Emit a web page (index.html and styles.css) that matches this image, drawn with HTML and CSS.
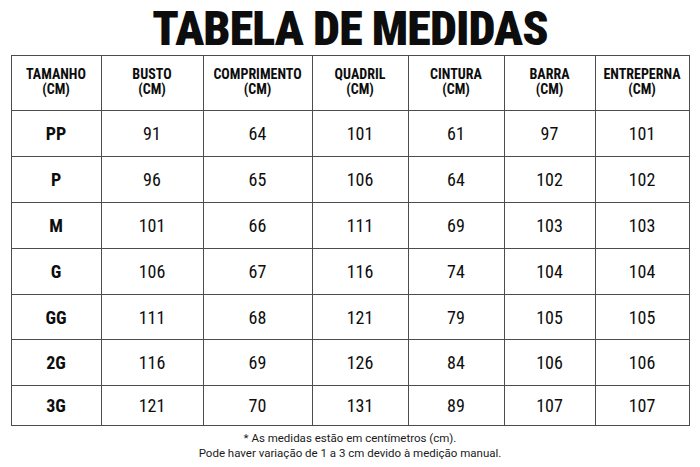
FILE: index.html
```html
<!DOCTYPE html>
<html lang="pt-BR">
<head>
<meta charset="utf-8">
<title>Tabela de Medidas</title>
<link rel="stylesheet" href="styles.css">
</head>
<body>
<div class="page">
  <h1 class="title">TABELA DE MEDIDAS</h1>
  <table class="sizes">
    <colgroup>
      <col class="c1"><col class="c2"><col class="c3"><col class="c4"><col class="c5"><col class="c6"><col class="c7">
    </colgroup>
    <thead>
      <tr>
        <th>TAMANHO<br>(CM)</th>
        <th>BUSTO<br>(CM)</th>
        <th>COMPRIMENTO<br>(CM)</th>
        <th>QUADRIL<br>(CM)</th>
        <th>CINTURA<br>(CM)</th>
        <th>BARRA<br>(CM)</th>
        <th>ENTREPERNA<br>(CM)</th>
      </tr>
    </thead>
    <tbody>
      <tr><td class="size">PP</td><td>91</td><td>64</td><td>101</td><td>61</td><td>97</td><td>101</td></tr>
      <tr><td class="size">P</td><td>96</td><td>65</td><td>106</td><td>64</td><td>102</td><td>102</td></tr>
      <tr><td class="size">M</td><td>101</td><td>66</td><td>111</td><td>69</td><td>103</td><td>103</td></tr>
      <tr><td class="size">G</td><td>106</td><td>67</td><td>116</td><td>74</td><td>104</td><td>104</td></tr>
      <tr><td class="size">GG</td><td>111</td><td>68</td><td>121</td><td>79</td><td>105</td><td>105</td></tr>
      <tr><td class="size">2G</td><td>116</td><td>69</td><td>126</td><td>84</td><td>106</td><td>106</td></tr>
      <tr class="last"><td class="size">3G</td><td>121</td><td>70</td><td>131</td><td>89</td><td>107</td><td>107</td></tr>
    </tbody>
  </table>
  <div class="notes">
    <p>* As medidas estão em centímetros (cm).</p>
    <p>Pode haver variação de 1 a 3 cm devido à medição manual.</p>
  </div>
</div>
</body>
</html>
```
FILE: styles.css
```css
html, body {
  margin: 0;
  padding: 0;
  background: #ffffff;
}
.page {
  width: 700px;
  height: 467px;
  display: flex;
  flex-direction: column;
  align-items: center;
  font-family: Roboto, "Liberation Sans", sans-serif;
  color: #0d0d0d;
}
.title {
  margin: 0 0 -2px;
  height: 57px;
  line-height: 57px;
  font-size: 48px;
  font-weight: 900;
  font-stretch: 75%;
  font-variation-settings: "wdth" 75;
  text-align: center;
  letter-spacing: -0.9px;
}
.sizes {
  width: 678px;
  border-collapse: collapse;
  table-layout: fixed;
}
.c1 { width: 90px; }
.c2 { width: 102px; }
.c3 { width: 109px; }
.c4 { width: 96px; }
.c5 { width: 96px; }
.c6 { width: 91px; }
.c7 { width: 94px; }
.sizes th,
.sizes td {
  border: 1px solid #4d4d4d;
  text-align: center;
  vertical-align: middle;
  padding: 0;
}
.sizes th {
  height: 52px;
  font-size: 14px;
  line-height: 15px;
  font-weight: 700;
  font-stretch: 78%;
  font-variation-settings: "wdth" 78;
  padding-bottom: 2px;
}
.sizes td {
  height: 44.9px;
  font-size: 18px;
  font-weight: 400;
  font-stretch: 75%;
  font-variation-settings: "wdth" 75;
}
.sizes td.size {
  font-weight: 700;
}
.sizes tr.last td {
  height: 39px;
}
.notes {
  padding-top: 5px;
  text-align: center;
  font-size: 11.5px;
  line-height: 15px;
  color: #1a1a1a;
}
.notes p {
  margin: 0;
}
```
